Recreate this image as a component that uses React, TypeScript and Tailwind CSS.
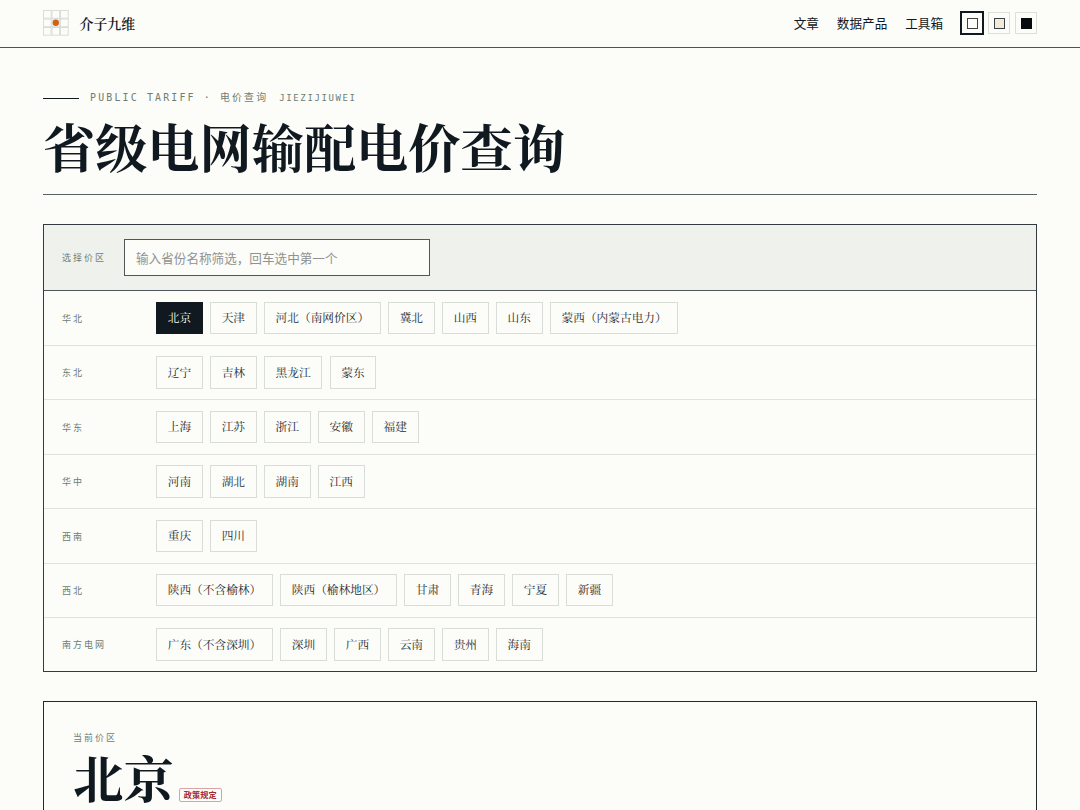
import clsx from "clsx";

const SERIF = "font-['Noto_Serif_CJK_SC','Noto_Serif_SC','Source_Han_Serif_SC','Noto_Sans_CJK_SC',serif]";
const MONO = "font-['DejaVu_Sans_Mono','Noto_Sans_CJK_SC',monospace]";

const regions = [
  { name: "华北", zones: ["北京", "天津", "河北（南网价区）", "冀北", "山西", "山东", "蒙西（内蒙古电力）"] },
  { name: "东北", zones: ["辽宁", "吉林", "黑龙江", "蒙东"] },
  { name: "华东", zones: ["上海", "江苏", "浙江", "安徽", "福建"] },
  { name: "华中", zones: ["河南", "湖北", "湖南", "江西"] },
  { name: "西南", zones: ["重庆", "四川"] },
  { name: "西北", zones: ["陕西（不含榆林）", "陕西（榆林地区）", "甘肃", "青海", "宁夏", "新疆"] },
  { name: "南方电网", zones: ["广东（不含深圳）", "深圳", "广西", "云南", "贵州", "海南"] },
];

const themes = [
  { name: "paper", fill: "bg-[#fcfcf8] border-[#3c4148]" },
  { name: "sepia", fill: "bg-[#f2eadb] border-[#3c4148]" },
  { name: "dark", fill: "bg-[#080b0e] border-[#080b0e]" },
];

function Logo() {
  return (
    <svg width="26" height="26" viewBox="0 0 26 26" fill="none" className="shrink-0">
      {[0.5, 9, 17.5].map((y) =>
        [0.5, 9, 17.5].map((x) => (
          <rect key={`${x}-${y}`} x={x} y={y} width="7.7" height="7.7" stroke="#d9ddd8" />
        )),
      )}
      <circle cx="12.8" cy="12.8" r="3.2" fill="#d65f16" />
    </svg>
  );
}

function Header() {
  return (
    <header className="flex h-12 items-center justify-between border-b border-[#4d5359] px-[43px] pb-px">
      <a className="flex items-center gap-[10.5px]">
        <Logo />
        <span className={clsx(SERIF, "pt-px text-[13.95px] font-semibold leading-none")}>介子九维</span>
      </a>
      <div className="flex items-center">
        <nav className="flex gap-[18px] pt-px text-[12.6px] leading-none">
          <a>文章</a>
          <a>数据产品</a>
          <a>工具箱</a>
        </nav>
        <div className="ml-[17px] flex items-center gap-[5px]">
          {themes.map((t, i) => (
            <button
              key={t.name}
              aria-label={t.name}
              className={clsx(
                "grid place-items-center",
                i === 0 ? "-mr-px size-6 border-2 border-[#101820]" : "size-[22px] border border-[#dce0da]",
              )}
            >
              <span className={clsx("size-[11px] border", t.fill)} />
            </button>
          ))}
        </div>
      </div>
    </header>
  );
}

function PageTitle() {
  return (
    <div className="h-[147px] border-b border-[#5b6066] pt-[43px]">
      <div className={clsx(MONO, "flex h-[15px] items-center text-[9.9px] leading-none tracking-[2.18px] text-[#6f7d74]")}>
        <span className="mr-[11px] h-px w-9 bg-[#101820]" />
        <span className="pb-[2px]">PUBLIC TARIFF · 电价查询</span>
        <span className="ml-[11px] text-[9px] tracking-[1.62px]">JIEZIJIUWEI</span>
      </div>
      <h1 className={clsx(SERIF, "mt-[10px] text-[52.2px] font-bold leading-[60px]")}>省级电网输配电价查询</h1>
    </div>
  );
}

function ZonePicker() {
  return (
    <section className="mt-[29px] border border-[#343a41]">
      <div className="flex h-[66.4px] items-center border-b border-[#50565c] bg-[#eff1ed] pl-[18px]">
        <label className={clsx(MONO, "w-[62px] pt-[2px] text-[9px] tracking-[1.98px] text-[#6f7d74]")}>选择价区</label>
        <input
          placeholder="输入省份名称筛选，回车选中第一个"
          className="h-[37px] w-[306px] border border-[#50565c] bg-[#fcfcf8] px-[11px] text-[12.6px] placeholder:text-[#8f9292]"
        />
      </div>
      {regions.map((r, i) => (
        <div
          key={r.name}
          className="flex h-[54.45px] items-center border-b border-[#dfe3dd] pl-[18px] last:h-[52.9px] last:border-b-0"
        >
          <div className={clsx(MONO, "w-[94px] pt-[3px] text-[9px] tracking-[1.98px] text-[#6f7d74]")}>{r.name}</div>
          <div className="flex gap-[7.2px]">
            {r.zones.map((zone, j) => (
              <button
                key={zone}
                className={clsx(
                  SERIF,
                  "h-[32.4px] border px-[10.7px] text-[11.7px] leading-none",
                  i === 0 && j === 0 ? "border-[#101820] bg-[#101820] text-[#fcfcf8]" : "border-[#d9ddd8] text-[#242b32]",
                )}
              >
                {zone}
              </button>
            ))}
          </div>
        </div>
      ))}
    </section>
  );
}

function CurrentZone() {
  return (
    <section className="mt-[29px] h-[240px] border border-[#23292f] px-[29px] pt-[29px]">
      <div className={clsx(MONO, "text-[9px] leading-[14px] tracking-[1.98px] text-[#6f7d74]")}>当前价区</div>
      <div className="mt-[6px] flex items-end">
        <h2 className={clsx(SERIF, "text-[50.4px] font-bold leading-[50px]")}>北京</h2>
        <span className="-mb-px ml-[5px] rounded-[2px] border border-[#d9a3a3] px-[4px] text-[8.1px] font-bold leading-[12px] tracking-[0.1px] text-[#a32832]">
          政策规定
        </span>
      </div>
    </section>
  );
}

export default function App() {
  return (
    <div className="h-[810px] overflow-hidden bg-[#fcfcf8] font-['Noto_Sans_CJK_SC',sans-serif] text-[#101820]">
      <Header />
      <main className="px-[43px]">
        <PageTitle />
        <ZonePicker />
        <CurrentZone />
      </main>
    </div>
  );
}
